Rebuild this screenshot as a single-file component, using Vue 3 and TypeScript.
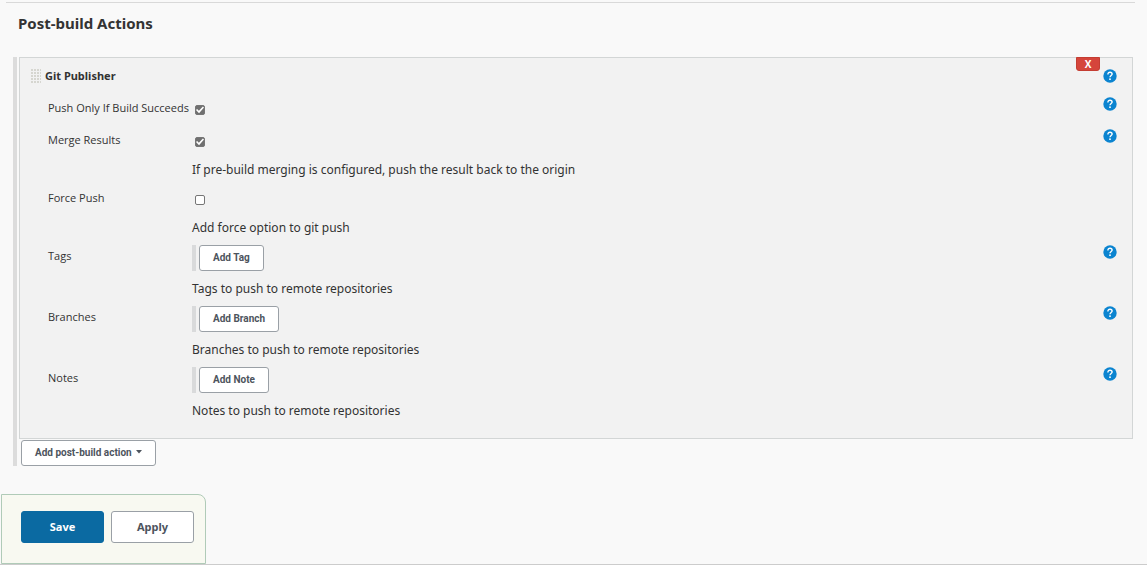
<script setup lang="ts">
import { reactive } from 'vue'

interface Row {
  id: string
  label: string
  kind: 'check' | 'button'
  button?: string
  description?: string
  help: boolean
}

const rows: Row[] = [
  { id: 'push-only', label: 'Push Only If Build Succeeds', kind: 'check', help: true },
  {
    id: 'merge',
    label: 'Merge Results',
    kind: 'check',
    description: 'If pre-build merging is configured, push the result back to the origin',
    help: true,
  },
  { id: 'force', label: 'Force Push', kind: 'check', description: 'Add force option to git push', help: false },
  { id: 'tags', label: 'Tags', kind: 'button', button: 'Add Tag', description: 'Tags to push to remote repositories', help: true },
  { id: 'branches', label: 'Branches', kind: 'button', button: 'Add Branch', description: 'Branches to push to remote repositories', help: true },
  { id: 'notes', label: 'Notes', kind: 'button', button: 'Add Note', description: 'Notes to push to remote repositories', help: true },
]

const checked = reactive<Record<string, boolean>>({ 'push-only': true, merge: true, force: false })
</script>

<template>
  <form class="page" @submit.prevent>
    <h1 class="title">Post-build Actions</h1>

    <div class="list">
      <section class="panel">
        <button type="button" class="delete" aria-label="Delete">X</button>
        <header class="panel-head">
          <svg class="grip" width="10" height="15" viewBox="0 0 10 15" aria-hidden="true">
            <defs>
              <pattern id="grip-dots" width="3" height="3" patternUnits="userSpaceOnUse">
                <rect width="2" height="2" fill="#d6d6d0" />
              </pattern>
            </defs>
            <rect width="10" height="15" fill="url(#grip-dots)" />
          </svg>
          <h2 class="name">Git Publisher</h2>
          <button type="button" class="help" aria-label="Help for Git Publisher">
            <svg width="14" height="14" viewBox="0 0 14 14" aria-hidden="true">
              <circle cx="7" cy="7" r="6.7" fill="#0b84d0" />
              <path d="M4.9 5.4C4.9 4 5.8 3.3 7 3.3s2.1.7 2.1 1.8C9.1 6.5 7 6.6 7 8.3" fill="none" stroke="#fff" stroke-width="1.4" />
              <rect x="6.2" y="9.4" width="1.6" height="1.6" fill="#fff" />
            </svg>
          </button>
        </header>

        <div v-for="row in rows" :key="row.id" class="row" :class="row.kind">
          <label class="label" :for="row.id">{{ row.label }}</label>
          <div class="setting">
            <div v-if="row.kind === 'check'" class="check-line">
              <input :id="row.id" v-model="checked[row.id]" class="box" type="checkbox" />
            </div>
            <div v-else class="adder">
              <button :id="row.id" type="button" class="btn">{{ row.button }}</button>
            </div>
            <p v-if="row.description" class="description">{{ row.description }}</p>
          </div>
          <button v-if="row.help" type="button" class="help" :aria-label="'Help for ' + row.label">
            <svg width="14" height="14" viewBox="0 0 14 14" aria-hidden="true">
              <circle cx="7" cy="7" r="6.7" fill="#0b84d0" />
              <path d="M4.9 5.4C4.9 4 5.8 3.3 7 3.3s2.1.7 2.1 1.8C9.1 6.5 7 6.6 7 8.3" fill="none" stroke="#fff" stroke-width="1.4" />
              <rect x="6.2" y="9.4" width="1.6" height="1.6" fill="#fff" />
            </svg>
          </button>
        </div>
      </section>

      <button type="button" class="btn add-action">
        Add post-build action
        <svg width="6" height="6" viewBox="0 0 6 6" aria-hidden="true"><path d="M0 0h6L3 3.5z" fill="#4d545d" /></svg>
      </button>
    </div>

    <footer class="bottom">
      <div class="actions">
        <button type="submit" class="big primary">Save</button>
        <button type="button" class="big">Apply</button>
      </div>
    </footer>
  </form>
</template>

<style>
body {
  margin: 0;
  background: #fff;
}
</style>

<style scoped>
* {
  box-sizing: border-box;
}

.page {
  padding-top: 2px;
  background: #f9f9f9;
  color: #333;
  font-family: "Noto Sans", "Open Sans", sans-serif;
  font-size: 12px;
}

.title {
  margin: 0 12px 0 6px;
  padding: 9px 12px 22px;
  border-top: 1px solid #d9d9d9;
  font-size: 15px;
  line-height: 23px;
  font-weight: 700;
}

.list {
  margin: 0 14px 28px 13px;
  padding-left: 2px;
  border-left: 4px solid #dcdcdc;
}

.panel {
  position: relative;
  padding-bottom: 15px;
  border: 1px solid #d3d6d6;
  background: #f2f2f2;
}

.delete {
  position: absolute;
  top: -1px;
  right: 32px;
  width: 24px;
  height: 14px;
  padding: 0;
  border: 1px solid #c43d32;
  border-radius: 0 0 3px 3px;
  background: #d5453b;
  color: #fff;
  font: 700 10px/12px "Open Sans", sans-serif;
}

.panel-head {
  display: flex;
  height: 34px;
  padding: 11px 15px 0 11px;
}

.name {
  flex: 1;
  margin: 0 0 0 4px;
  font-size: 11px;
  line-height: 14px;
  font-weight: 700;
}

.help {
  width: 14px;
  height: 14px;
  padding: 0;
  border: 0;
  background: none;
}

.help svg {
  display: block;
}

.row {
  display: grid;
  grid-template-columns: 144px 1fr 14px;
  min-height: 32px;
  padding: 5px 15px 0 28px;
}

.label {
  padding-top: 3px;
  font-family: "Open Sans", "Noto Sans", sans-serif;
  font-size: 11px;
  line-height: 16px;
}

.check-line {
  display: flex;
  height: 27px;
  padding: 8px 0 0 3px;
}

.box {
  appearance: none;
  display: grid;
  place-items: center;
  width: 10px;
  height: 10px;
  margin: 0;
  border: 1px solid #767676;
  border-radius: 2px;
  background: #fff;
}

.box:checked {
  background: #707070;
}

.box:checked::after {
  content: "";
  width: 8px;
  height: 8px;
  background: #fff;
  clip-path: polygon(0 50%, 14% 36%, 36% 60%, 86% 6%, 100% 20%, 38% 90%);
}

.description {
  margin: 0;
  padding: 5px 0 3px;
  font-size: 12px;
  line-height: 18px;
}

.adder {
  height: 26px;
  padding-left: 3px;
  border-left: 4px solid #d9dadb;
}

.button .description {
  padding-top: 9px;
}

.btn {
  height: 26px;
  padding: 0 13px;
  border: 1px solid #9aa0a6;
  border-radius: 3px;
  background: #fff;
  color: #4d545d;
  font: 700 10px/22px Roboto, "Noto Sans", sans-serif;
}

.add-action {
  display: flex;
  align-items: center;
  gap: 4px;
  margin: 1px 0 0 2px;
}

.bottom {
  padding-left: 1px;
  border-bottom: 1px solid #ccc;
}

.actions {
  display: flex;
  gap: 7px;
  width: fit-content;
  padding: 16px 11px 20px 19px;
  border: 1px solid #b0cbb8;
  border-radius: 0 8px 0 0;
  background: #f8f9f1;
}

.big {
  width: 83px;
  height: 32px;
  padding: 0;
  border: 1px solid #9aa0a6;
  border-radius: 3px;
  background: #fff;
  color: #4d545d;
  font: 700 11px/20px "Noto Sans", "Open Sans", sans-serif;
}

.primary {
  border-color: #0b6aa2;
  background: #0b6aa2;
  color: #fff;
}
</style>
